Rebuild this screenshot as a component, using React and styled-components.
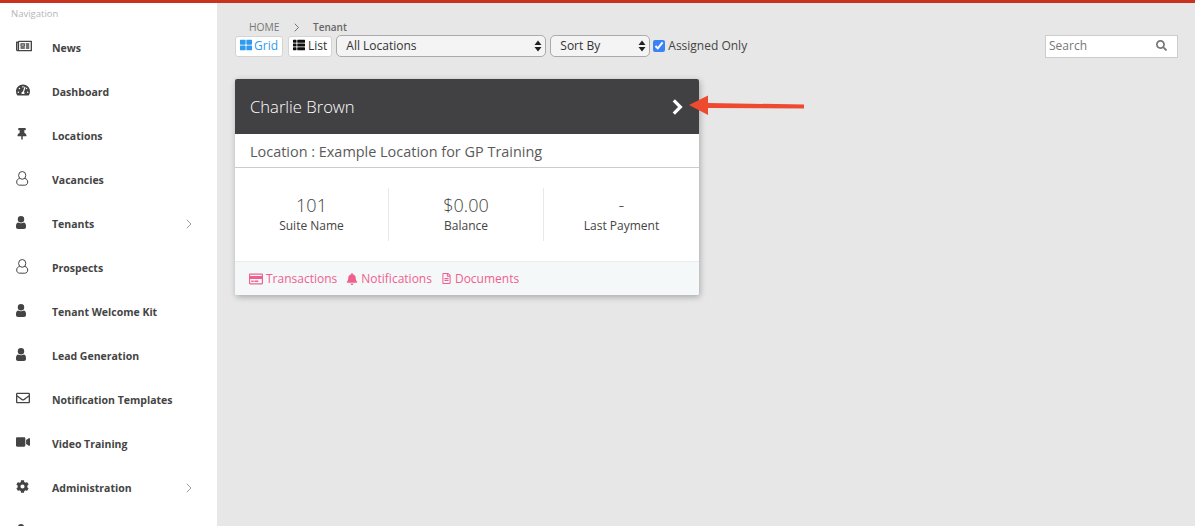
import React from "react";
import styled, { createGlobalStyle } from "styled-components";
import {
  FaRegNewspaper, FaTachometerAlt, FaThumbtack, FaRegEnvelope, FaVideo, FaCog,
  FaThLarge, FaThList, FaRegCreditCard, FaBell, FaRegFileAlt, FaSearch,
} from "react-icons/fa";

const Global = createGlobalStyle`
  html, body { margin: 0; padding: 0; height: 526px; overflow: hidden; background: #e7e7e7; }
  body { font-family: "Open Sans", "Liberation Sans", sans-serif; }
  * { box-sizing: border-box; }
`;

const Page = styled.div`
  height: 526px;
  display: flex;
  flex-direction: column;
  overflow: hidden;
`;
const TopBar = styled.div`
  height: 3px;
  flex: none;
  background: #c9321f;
`;
const Body = styled.div`
  flex: 1;
  display: flex;
  min-height: 0;
`;
const Sidebar = styled.nav`
  width: 217px;
  flex: none;
  background: #fff;
  overflow: hidden;
`;
const NavTitle = styled.div`
  font-size: 9.5px;
  line-height: 13px;
  padding: 4px 0 0 11px;
  height: 23px;
  color: #b5b5b5;
`;
const NavItem = styled.div`
  height: 44px;
  display: flex;
  align-items: center;
  padding-left: 16px;
  color: #444;
  font-size: 10.5px;
  font-weight: 700;
`;
const NavIcon = styled.span`
  width: 36px;
  flex: none;
  display: flex;
  align-items: center;
  transform: translateY(-2px);
  color: #444;
`;
const NavLabel = styled.span`
  flex: 1;
`;
const NavChevron = styled.span`
  display: flex;
  width: 31px;
  color: #9a9aa2;
`;
const Main = styled.main`
  flex: 1;
  min-width: 0;
  padding: 0 17px 0 18px;
  position: relative;
`;
const Crumbs = styled.div`
  display: flex;
  align-items: center;
  height: 16px;
  margin-top: 16px;
  padding-left: 14px;
  font-size: 10.3px;
  color: #777;
  gap: 14px;
`;
const CrumbCurrent = styled.span`
  font-size: 10px;
  font-weight: 600;
  color: #666;
`;
const Toolbar = styled.div`
  display: flex;
  align-items: center;
  height: 22px;
`;
const ToggleButton = styled.button`
  height: 21px;
  padding: 0 4px 2px;
  margin-right: ${(p) => (p.$active ? 5 : 4)}px;
  border: 1px solid #d4d4d4;
  border-radius: 3px;
  background: #fff;
  display: inline-flex;
  align-items: center;
  gap: ${(p) => (p.$active ? 2 : 3)}px;
  font: 12px "Open Sans", sans-serif;
  color: ${(p) => (p.$active ? "#2f9bf0" : "#333")};
`;
const SelectWrap = styled.div`
  position: relative;
  width: ${(p) => p.$w}px;
  margin-right: ${(p) => p.$gap}px;
`;
const Select = styled.select`
  appearance: none;
  display: block;
  width: 100%;
  height: 22px;
  padding: 0 9px 2px;
  border: 1px solid #aaa;
  border-radius: 5px;
  background: #f4f4f4;
  font: 12px "Open Sans", sans-serif;
  color: #333;
`;
const SelectArrows = styled.svg`
  position: absolute;
  right: 4px;
  top: 5px;
  pointer-events: none;
`;
const CheckLabel = styled.label`
  display: flex;
  align-items: center;
  font-size: 12px;
  color: #444;
  padding-bottom: 1px;
`;
const Check = styled.input`
  width: 12px;
  height: 12px;
  margin: 1px 3px 0 0;
  accent-color: #3b82f6;
`;
const SearchBox = styled.div`
  margin-left: auto;
  width: 133px;
  height: 23px;
  display: flex;
  align-items: center;
  justify-content: space-between;
  padding: 0 10px 2px 3px;
  background: #fff;
  border: 1px solid #ccc;
  font-size: 12px;
  color: #777;
`;
const Card = styled.section`
  width: 464px;
  margin-top: 22px;
  background: #fff;
  border-radius: 2px;
  box-shadow: 1px 2px 6px rgba(0, 0, 0, 0.28);
  overflow: hidden;
`;
const CardHead = styled.header`
  height: 55px;
  background: #414042;
  color: #fff;
  display: flex;
  align-items: center;
  justify-content: space-between;
  padding: 0 16px 0 15px;
  font-size: 16.6px;
  font-weight: 300;
`;
const LocationRow = styled.div`
  height: 34px;
  display: flex;
  align-items: center;
  padding: 2px 15px 0;
  font-size: 14.45px;
  color: #5a5a5a;
  border-bottom: 1px solid #ccc;
`;
const Stats = styled.div`
  height: 93px;
  display: grid;
  grid-template-columns: 153px 155px 1fr;
  padding-top: 20px;
`;
const Stat = styled.div`
  height: 53px;
  text-align: center;
  border-left: ${(p) => (p.$first ? "none" : "1px solid #e8e8e8")};
`;
const StatValue = styled.div`
  font-size: 18px;
  line-height: 24px;
  padding-top: 5px;
  font-weight: 300;
  color: #444;
`;
const StatLabel = styled.div`
  font-size: 12px;
  line-height: 16px;
  padding-top: 1px;
  color: #444;
`;
const CardFoot = styled.footer`
  height: 34px;
  background: #f5f8f9;
  border-top: 1px solid #e8ecee;
  display: flex;
  align-items: center;
  padding: 0 14px;
`;
const FootLink = styled.a`
  display: flex;
  align-items: center;
  gap: ${(p) => p.$gap}px;
  margin-right: ${(p) => p.$mr}px;
  font-size: 12px;
  color: #f0608f;
`;
const Arrow = styled.svg`
  position: absolute;
  left: 471px;
  top: 91px;
`;

const OutlineUser = () => (
  <svg width="13" height="15" viewBox="0 0 13 15" fill="none" stroke="#444" strokeWidth="1">
    <ellipse cx="6.2" cy="4.4" rx="3.6" ry="3.9" />
    <path d="M3.6 7.4 C1.6 8 .7 9.2 .7 11 C.7 13 1.8 14.2 3.8 14.2 H8.6 C10.6 14.2 11.7 13 11.7 11 C11.7 9.2 10.8 8 8.8 7.4" />
  </svg>
);
const SolidUser = () => (
  <svg width="10" height="13" viewBox="0 0 10 13" fill="#444">
    <circle cx="5" cy="3.2" r="3.2" />
    <path d="M2 6.4 C3.5 7.4 6.5 7.4 8 6.4 C9.4 7 10 8.2 10 10 V11 C10 12.2 9.2 13 8 13 H2 C.8 13 0 12.2 0 11 V10 C0 8.2 .6 7 2 6.4Z" />
  </svg>
);
const ThinChevron = ({ size = 10, color = "currentColor" }) => (
  <svg width={size * 0.6} height={size} viewBox="0 0 6 10" fill="none" stroke={color} strokeWidth="1">
    <path d="M.8 .8 L5 5 L.8 9.2" />
  </svg>
);
const BoldChevron = () => (
  <svg width="11" height="16" viewBox="0 0 11 16" fill="none" stroke="#fff" strokeWidth="3.2">
    <path d="M1.8 1.4 L8.4 8 L1.8 14.6" />
  </svg>
);

const items = [
  ["News", <FaRegNewspaper size={16} />],
  ["Dashboard", <FaTachometerAlt size={14} />],
  ["Locations", <FaThumbtack size={12} />],
  ["Vacancies", <OutlineUser />],
  ["Tenants", <SolidUser />, true],
  ["Prospects", <OutlineUser />],
  ["Tenant Welcome Kit", <SolidUser />],
  ["Lead Generation", <SolidUser />],
  ["Notification Templates", <FaRegEnvelope size={14} />],
  ["Video Training", <FaVideo size={14} />],
  ["Administration", <FaCog size={13} />, true],
  ["", <SolidUser />],
];

const Arrows = () => (
  <SelectArrows width="8" height="12" viewBox="0 0 8 12">
    <path d="M4 0.5 L7.5 5 H0.5Z M4 11.5 L7.5 7 H0.5Z" fill="#222" />
  </SelectArrows>
);

export default function App() {
  return (
    <Page>
      <Global />
      <TopBar />
      <Body>
        <Sidebar>
          <NavTitle>Navigation</NavTitle>
          {items.map(([label, icon, more], i) => (
            <NavItem key={i}>
              <NavIcon>{icon}</NavIcon>
              <NavLabel>{label}</NavLabel>
              {more && <NavChevron><ThinChevron size={10} /></NavChevron>}
            </NavItem>
          ))}
        </Sidebar>
        <Main>
          <Crumbs>
            <span>HOME</span>
            <ThinChevron size={9} color="#666" />
            <CrumbCurrent>Tenant</CrumbCurrent>
          </Crumbs>
          <Toolbar>
            <ToggleButton $active><FaThLarge size={12} />Grid</ToggleButton>
            <ToggleButton><FaThList size={12} color="#111" />List</ToggleButton>
            <SelectWrap $w={210} $gap={4}>
              <Select defaultValue="all"><option value="all">All Locations</option></Select>
              <Arrows />
            </SelectWrap>
            <SelectWrap $w={100} $gap={3}>
              <Select defaultValue="sort"><option value="sort">Sort By</option></Select>
              <Arrows />
            </SelectWrap>
            <CheckLabel><Check type="checkbox" defaultChecked />Assigned Only</CheckLabel>
            <SearchBox>Search<FaSearch size={11} color="#777" /></SearchBox>
          </Toolbar>
          <Card>
            <CardHead>Charlie Brown<BoldChevron /></CardHead>
            <LocationRow>Location : Example Location for GP Training</LocationRow>
            <Stats>
              <Stat $first><StatValue>101</StatValue><StatLabel>Suite Name</StatLabel></Stat>
              <Stat><StatValue>$0.00</StatValue><StatLabel>Balance</StatLabel></Stat>
              <Stat><StatValue>-</StatValue><StatLabel>Last Payment</StatLabel></Stat>
            </Stats>
            <CardFoot>
              <FootLink $gap={3} $mr={9}><FaRegCreditCard size={14} />Transactions</FootLink>
              <FootLink $gap={3} $mr={9}><FaBell size={12} />Notifications</FootLink>
              <FootLink $gap={3} $mr={0}><FaRegFileAlt size={11} />Documents</FootLink>
            </CardFoot>
          </Card>
          <Arrow width="118" height="24" viewBox="0 0 118 24">
            <path d="M1 11 L20 1.5 V9 L116 10.5 V14.5 L20 14 V21 Z" fill="#ee4a2f" />
          </Arrow>
        </Main>
      </Body>
    </Page>
  );
}
